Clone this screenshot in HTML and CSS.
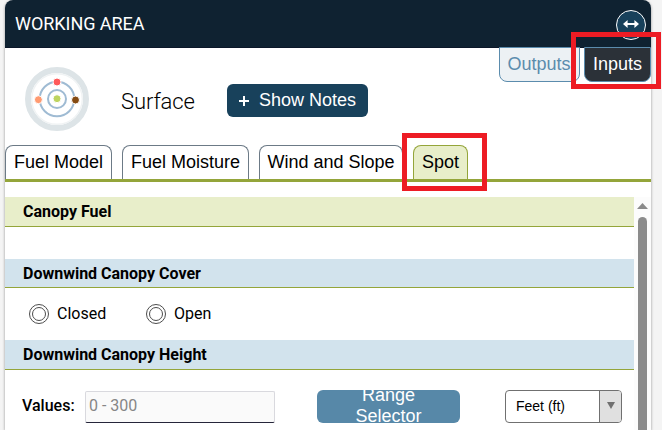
FILE: index.html
```html
<!DOCTYPE html>
<html lang="en">
<head>
<meta charset="utf-8">
<title>Working Area</title>
<link rel="stylesheet" href="styles.css">
</head>
<body>
<main class="card">
  <header class="card-header">
    <h1 class="card-title">WORKING AREA</h1>
    <button class="resize" aria-label="Resize">
      <svg width="16" height="10" viewBox="0 0 16 10"><path d="M0 5 4.6.9V4h6.8V.9L16 5l-4.6 4.1V6H4.6v3.1z" fill="#fff"/></svg>
    </button>
  </header>
  <section class="module">
    <svg class="module-icon" width="64" height="64" viewBox="0 0 64 64">
      <circle cx="32" cy="32" r="29" fill="#fff" stroke="#dde4e7" stroke-width="6"/>
      <circle cx="32" cy="32" r="25.3" fill="none" stroke="#f0f3f4" stroke-width="1.4"/>
      <g fill="none" stroke="#9fbbd3" stroke-width="2"><circle cx="32" cy="32" r="17.3"/><circle cx="32" cy="32" r="9"/></g>
      <g stroke="#fff" stroke-width="1">
        <circle cx="32" cy="15" r="4" fill="#ff5a5a"/><circle cx="13.4" cy="32.7" r="4" fill="#ff9a70"/>
        <circle cx="50.5" cy="33" r="4" fill="#844a12"/><circle cx="32" cy="31.7" r="4" fill="#bdd45f"/>
      </g>
    </svg>
    <h2 class="module-name">Surface</h2>
    <button class="notes"><svg width="10" height="10" viewBox="0 0 10 10"><path d="M5 0v10M0 5h10" stroke="#fff" stroke-width="2"/></svg><span>Show Notes</span></button>
    <nav class="io-tabs">
      <button class="io-tab outputs">Outputs</button>
      <button class="io-tab inputs">Inputs</button>
    </nav>
  </section>
  <nav class="tabs">
    <button class="tab tab-model">Fuel Model</button>
    <button class="tab tab-moisture">Fuel Moisture</button>
    <button class="tab tab-wind">Wind and Slope</button>
    <button class="tab tab-spot">Spot</button>
  </nav>
  <div class="scroller">
    <div class="form">
      <h3 class="group group-main">Canopy Fuel</h3>
      <h3 class="group">Downwind Canopy Cover</h3>
      <div class="radios">
        <label class="radio closed"><i class="dot"></i><span class="radio-text">Closed</span></label>
        <label class="radio"><i class="dot"></i><span class="radio-text">Open</span></label>
      </div>
      <h3 class="group">Downwind Canopy Height</h3>
      <div class="values">
        <label class="values-label" for="height">Values:</label>
        <input class="field" id="height" placeholder="0 - 300">
        <button class="range"><span>Range<br>Selector</span></button>
        <div class="unit"><span class="unit-name">Feet (ft)</span><span class="unit-arrow"><svg width="8" height="7" viewBox="0 0 8 7"><path d="M0 0h8L4 7z" fill="#707070"/></svg></span></div>
      </div>
    </div>
    <div class="scrollbar"><svg width="11" height="6" viewBox="0 0 11 6"><path d="M5.5 0 11 6H0z" fill="#8b8b8b"/></svg><div class="thumb"></div></div>
  </div>
</main>
<div class="marker marker-inputs"></div>
<div class="marker marker-spot"></div>
</body>
</html>
```
FILE: styles.css
```css
* { box-sizing: border-box; }
body { margin: 0; height: 430px; overflow: hidden; background: #f4f4f4; font-family: Roboto, sans-serif; color: #000; position: relative; }
h1, h2, h3 { margin: 0; }
button { margin: 0; padding: 0; border: 0; font-family: "Liberation Sans", sans-serif; white-space: nowrap; }
svg { display: block; flex: none; }

.card { width: 646px; height: 430px; margin-left: 5px; background: #fff; border-radius: 8px 8px 0 0; box-shadow: 0 1px 3px rgba(0,0,0,.4); overflow: hidden; }
.card-header { height: 48px; padding: 1px 5px 0 10px; display: flex; align-items: center; justify-content: space-between; background: #0f2231; border-bottom: 1px solid #0b1729; }
.card-title { font-size: 18px; font-weight: 400; line-height: 24px; letter-spacing: -0.05px; color: #fff; }
.resize { width: 30px; height: 30px; margin-top: 2px; display: flex; align-items: center; justify-content: center; padding-bottom: 2px; border: 1px solid #fff; border-radius: 50%; background: #18415b; }

.module { height: 97px; display: flex; align-items: flex-start; }
.module-icon { margin: 19px 0 0 20px; }
.module-name { width: 138px; margin: 39px 0 0; padding-left: 32px; font-size: 22px; font-weight: 300; line-height: 30px; letter-spacing: -0.1px; }
.notes { width: 141px; height: 33px; margin-top: 36px; padding-left: 12px; display: flex; align-items: center; gap: 10px; border-radius: 6px; background: #18415b; color: #fff; font-size: 18px; }
.io-tabs { margin: -1px 0 0 auto; display: flex; gap: 4px; }
.io-tab { height: 35px; border: 1px solid #5b8cad; border-radius: 0 0 8px 8px; font-size: 18px; }
.outputs { width: 81px; padding-right: 1px; background: #ecf1f4; color: #5b8cad; }
.inputs { width: 67px; background: #2b3138; color: #fff; }

.tabs { height: 37px; display: flex; gap: 10px; border-bottom: 3px solid #94a53a; }
.tab { height: 34px; border: 1px solid #6c7a86; border-bottom: 0; border-radius: 8px 8px 0 0; background: #fff; font-size: 18px; color: #000; }
.tab-model { width: 107px; }
.tab-moisture { width: 127px; }
.tab-wind { width: 144px; }
.tab-spot { width: 55px; background: #e8eeca; border-color: #94a53a; }

.scroller { height: 233px; margin-top: 15px; display: flex; }
.form { width: 629px; }
.group { height: 30px; padding-left: 18px; border-bottom: 1px solid #94a53a; background: #d2e3ed; font-size: 16px; font-weight: 700; line-height: 29px; }
.group + .group { height: 29px; }
.group-main { margin-bottom: 32px; background: #e8eeca; }
.radios { height: 52px; padding-left: 24px; display: flex; align-items: center; font-size: 16px; }
.radio { display: flex; align-items: center; gap: 8px; }
.radio-text { padding-bottom: 2px; }
.closed { width: 117px; }
.dot { width: 20px; height: 20px; display: flex; align-items: center; justify-content: center; border: 1px solid #4c4c4c; border-radius: 50%; }
.dot::after { content: ""; width: 12px; height: 12px; border: 1px solid #4c4c4c; border-radius: 50%; }

.values { padding: 20px 0 0 17px; display: flex; align-items: flex-start; }
.values-label { width: 63px; font-size: 16px; font-weight: 500; line-height: 31px; }
.field { width: 190px; height: 32px; margin: 1px 42px 0 0; padding: 0 0 4px 3px; border: 1px solid #d9d9de; border-bottom-color: #25253a; border-radius: 2px; background: #fafafa; font: 16px Roboto, sans-serif; }
.field::placeholder { color: #868686; }
.range { width: 143px; height: 33px; display: flex; align-items: center; justify-content: center; overflow: hidden; padding-bottom: 2px; border-radius: 6px; background: #5788a8; color: #fff; font-size: 18px; line-height: 21px; }
.unit { width: 117px; height: 33px; margin-left: 45px; display: flex; border: 1px solid #707070; border-radius: 4px; overflow: hidden; font: 14px "Liberation Sans", sans-serif; }
.unit-name { flex: 1; padding-left: 10px; line-height: 31px; }
.unit-arrow { width: 22px; display: flex; align-items: center; justify-content: center; padding-bottom: 2px; border-left: 1px solid #707070; background: #e0e0e0; }

.scrollbar { width: 17px; padding-top: 6px; display: flex; flex-direction: column; align-items: center; gap: 8px; background: #fcfcfc; }
.thumb { width: 9px; flex: 1; border-radius: 5px 5px 0 0; background: #8b8b8b; }

.marker { position: absolute; border: 5px solid #ed1c24; }
.marker-inputs { left: 571px; top: 32px; width: 90px; height: 57px; }
.marker-spot { left: 402px; top: 133px; width: 85px; height: 58px; }
```
